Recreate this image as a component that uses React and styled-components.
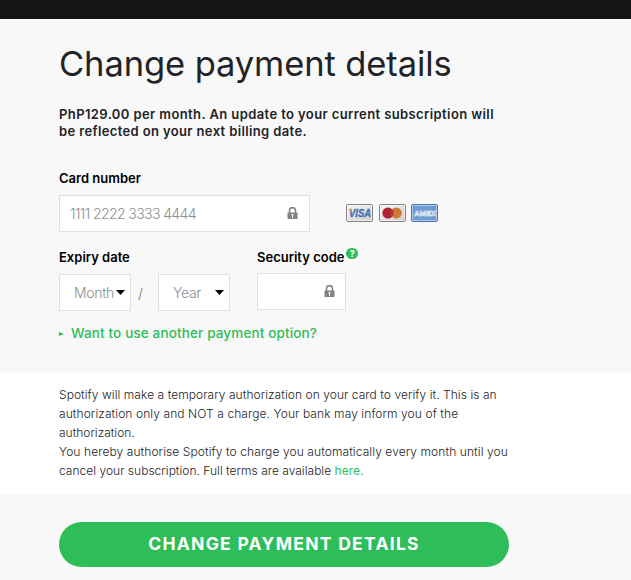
import React from 'react';
import styled, { createGlobalStyle } from 'styled-components';

const GlobalStyle = createGlobalStyle`
    * {
        box-sizing: border-box;
    }

    body {
        margin: 0;
        background: #f8f8f8;
        color: #222326;
        font-family: Inter, 'Liberation Sans', sans-serif;
        overflow: hidden;
    }
`;

const TopBar = styled.div`
    height: 19px;
    background: #141414;
`;

const Section = styled.section`
    height: 353px;
    padding: 24px 59px 0;
`;

const Title = styled.h1`
    margin: 0;
    font-size: 34.5px;
    line-height: 42px;
    font-weight: 400;
    letter-spacing: -0.1px;
    white-space: nowrap;
`;

const Summary = styled.p`
    margin: 21px 0 0;
    font-size: 13px;
    line-height: 17px;
    font-weight: 600;
`;

const Line = styled.span`
    display: block;
    white-space: nowrap;
    letter-spacing: ${({ $spacing }) => $spacing || 0}px;
`;

const Label = styled.label`
    display: flex;
    height: 17px;
    font-size: 13px;
    line-height: 17px;
    font-weight: 600;
    color: #000;
    white-space: nowrap;
`;

const CardField = styled.div`
    margin-top: 30px;
`;

const CardRow = styled.div`
    display: flex;
    align-items: center;
    margin-top: 8px;
`;

const Field = styled.div`
    display: flex;
    align-items: center;
    justify-content: space-between;
    width: ${({ $width }) => $width}px;
    height: 37px;
    padding: 0 11px 0 10px;
    background: #fff;
    border: 1px solid #dfe0e6;
    color: #8b8e90;
    font-size: 14px;
    font-weight: 300;
    letter-spacing: ${({ $spacing }) => $spacing || 0}px;
    white-space: nowrap;
`;

const Select = styled(Field)`
    padding: 0 5px 0 14px;
`;

const Cards = styled.div`
    display: flex;
    gap: 5.5px;
    margin-left: 36px;
    margin-top: -1px;
`;

const DateRow = styled.div`
    display: flex;
    margin-top: 17px;
`;

const Expiry = styled.div`
    width: 198px;
`;

const Selects = styled.div`
    display: flex;
    align-items: center;
    margin-top: 8px;
`;

const Slash = styled.span`
    width: 27px;
    padding: 2px 0 0 7px;
    color: #77797c;
    font-size: 14px;
    font-weight: 300;
`;

const CodeField = styled(Field)`
    margin-top: 7px;
    padding-right: 10px;
    justify-content: flex-end;
`;

const Help = styled.span`
    width: 12px;
    height: 11px;
    margin: -1px 0 0 2px;
    border-radius: 6px;
    background: #2ebd59;
    color: #fff;
    font-size: 9px;
    line-height: 11px;
    font-weight: 800;
    text-align: center;
`;

const OtherOption = styled.a`
    display: flex;
    align-items: center;
    margin-top: 14px;
    color: #2ebd59;
    font-size: 13.5px;
    line-height: 16px;
    font-weight: 500;
    white-space: nowrap;
    letter-spacing: 0.14px;

    svg {
        margin: 2px 7px 0 0;
    }
`;

const Terms = styled.section`
    height: 123px;
    padding: 13px 59px 0;
    background: #fff;
    font-size: 12px;
    line-height: 19px;
    font-weight: 300;
`;

const TermsLink = styled.a`
    color: #2ebd59;
    font-weight: 400;
`;

const Submit = styled.button`
    display: block;
    width: 450px;
    height: 45px;
    margin: 27px 0 0 59px;
    padding: 0;
    border: 0;
    border-radius: 23px;
    background: #2ebd59;
    color: #fff;
    font-family: inherit;
    font-size: 17.5px;
    line-height: 43px;
    font-weight: 700;
    letter-spacing: 1.28px;
    padding-bottom: 2px;
`;

const Lock = () => (
	<svg width="11" height="13" viewBox="0 0 11 13">
		<path d="M2.5 6V3.7a3 3 0 0 1 6 0V6" fill="none" stroke="#818181" strokeWidth="1.5" />
		<rect x="0.5" y="5.5" width="10" height="6.5" rx="0.6" fill="#818181" />
		<path d="M4.5 7h2v1.2H6V11H5V8.2H4.5z" fill="#fff" />
	</svg>
);

const Caret = () => (
	<svg width="9" height="5" viewBox="0 0 9 5">
		<path d="M0 0h9L4.5 5z" fill="#000" />
	</svg>
);

const Arrow = () => (
	<svg width="5" height="4" viewBox="0 0 5 4">
		<path d="M0 0L5 2L0 4z" fill="#2ebd59" />
	</svg>
);

const CardFrame = ({ fill, stroke, children }) => (
	<svg width="27" height="18" viewBox="0 0 27 18">
		<defs>
			<linearGradient id="silver" x2="1" y2="1">
				<stop offset="0" stopColor="#f7f7f7" />
				<stop offset="1" stopColor="#cfcfcf" />
			</linearGradient>
		</defs>
		<rect x="0.5" y="0.5" width="26" height="17" rx="1.5" fill={fill} stroke={stroke} />
		<rect x="1.5" y="1.5" width="24" height="15" fill="none" stroke="#fff" strokeOpacity="0.45" />
		{children}
	</svg>
);

const Visa = () => (
	<CardFrame fill="url(#silver)" stroke="#858585">
		<text x="3" y="12.8" fontFamily="Liberation Sans" fontSize="10" fontWeight="700" fontStyle="italic" fill="#3c6eb4" stroke="#3c6eb4" strokeWidth="0.3" textLength="22" lengthAdjust="spacingAndGlyphs">VISA</text>
		<path d="M2 5h3l1.2 3z" fill="#e39a3b" />
	</CardFrame>
);

const Mastercard = () => (
	<CardFrame fill="url(#silver)" stroke="#858585">
		<circle cx="17.3" cy="9" r="5.5" fill="#d07b35" />
		<circle cx="8.9" cy="9" r="5.5" fill="#b32134" />
		<path d="M11 7h4M11 9h4M11 11h4" stroke="#c14b32" />
	</CardFrame>
);

const Amex = () => (
	<CardFrame fill="#6f9bd4" stroke="#4675bb">
		<text x="3" y="12" fontFamily="Liberation Sans" fontSize="8" fontWeight="700" fill="#5f8ecb" stroke="#edf3fb" strokeWidth="0.6" textLength="22">AMEX</text>
	</CardFrame>
);

const App = () => (
	<>
		<GlobalStyle />
		<TopBar />
		<Section>
			<Title>Change payment details</Title>
			<Summary>
				<Line $spacing={0.4}>PhP129.00 per month. An update to your current subscription will</Line>
				<Line $spacing={0.37}>be reflected on your next billing date.</Line>
			</Summary>
			<CardField>
				<Label>Card number</Label>
				<CardRow>
					<Field $width={251} $spacing={-0.6}>
						1111 2222 3333 4444
						<Lock />
					</Field>
					<Cards>
						<Visa />
						<Mastercard />
						<Amex />
					</Cards>
				</CardRow>
			</CardField>
			<DateRow>
				<Expiry>
					<Label>Expiry date</Label>
					<Selects>
						<Select $width={72} $spacing={-0.3}>Month<Caret /></Select>
						<Slash>/</Slash>
						<Select $width={72} $spacing={-0.3}>Year<Caret /></Select>
					</Selects>
				</Expiry>
				<div>
					<Label>Security code<Help>?</Help></Label>
					<CodeField $width={89}><Lock /></CodeField>
				</div>
			</DateRow>
			<OtherOption>
				<Arrow />
				Want to use another payment option?
			</OtherOption>
		</Section>
		<Terms>
			<Line $spacing={0.06}>Spotify will make a temporary authorization on your card to verify it. This is an</Line>
			<Line $spacing={0.09}>authorization only and NOT a charge. Your bank may inform you of the</Line>
			<Line>authorization.</Line>
			<Line $spacing={0.09}>You hereby authorise Spotify to charge you automatically every month until you</Line>
			<Line $spacing={0.02}>cancel your subscription. Full terms are available <TermsLink>here.</TermsLink></Line>
		</Terms>
		<Submit>CHANGE PAYMENT DETAILS</Submit>
	</>
);

export default App;
